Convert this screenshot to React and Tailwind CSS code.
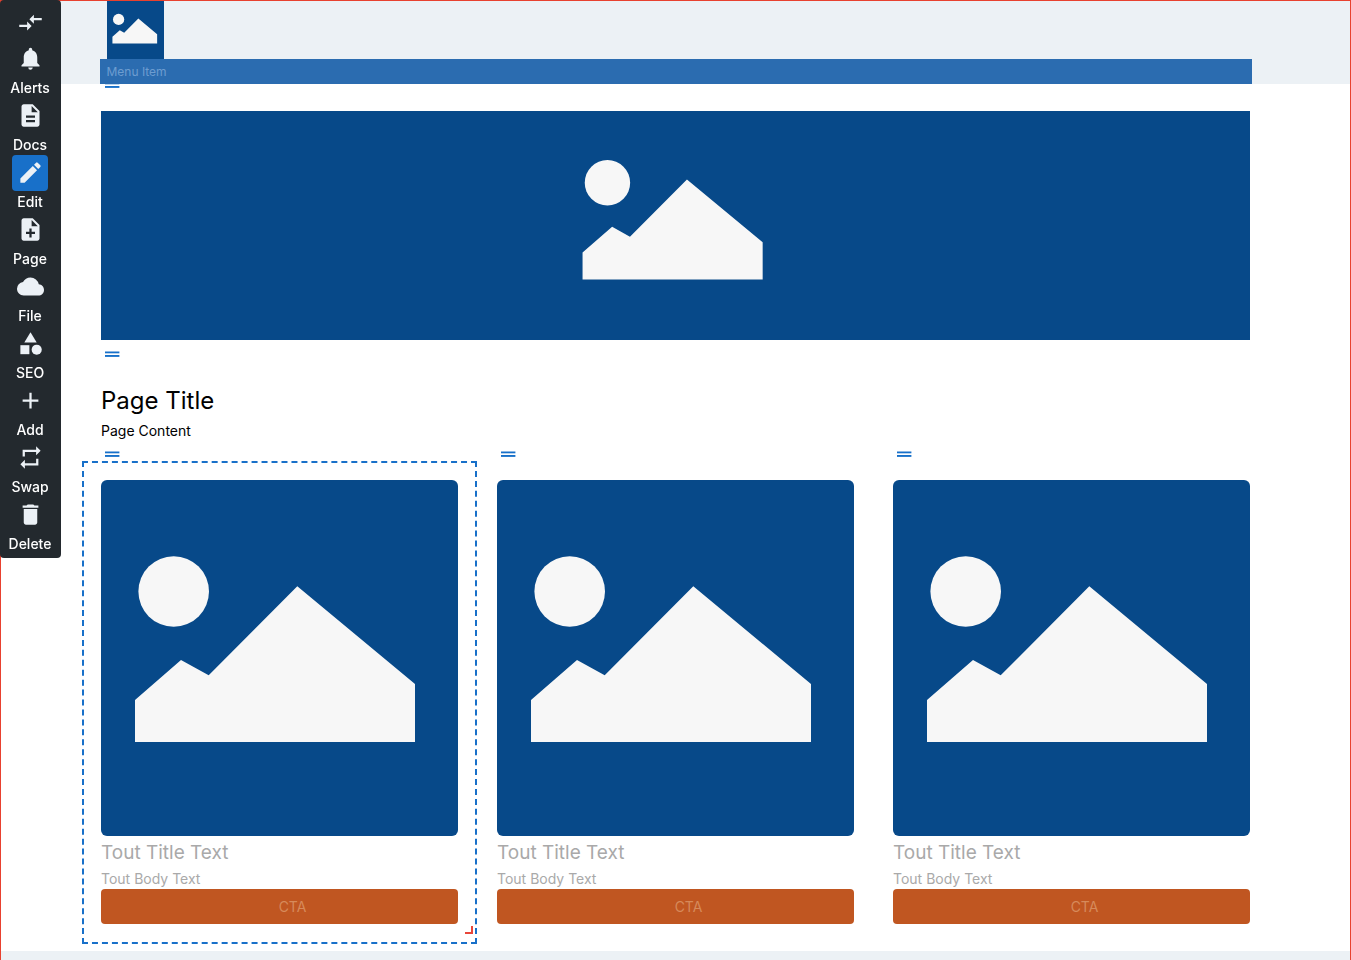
import React from "react";
import {
  MdAdd,
  MdCategory,
  MdCloud,
  MdCompareArrows,
  MdDelete,
  MdDescription,
  MdEdit,
  MdNoteAdd,
  MdNotifications,
  MdRepeat,
} from "react-icons/md";

const tools = [
  { label: "Alerts", Icon: MdNotifications },
  { label: "Docs", Icon: MdDescription },
  { label: "Edit", Icon: MdEdit, active: true },
  { label: "Page", Icon: MdNoteAdd },
  { label: "File", Icon: MdCloud },
  { label: "SEO", Icon: MdCategory },
  { label: "Add", Icon: MdAdd },
  { label: "Swap", Icon: MdRepeat },
  { label: "Delete", Icon: MdDelete },
];

const touts = [{ id: 1, selected: true }, { id: 2 }, { id: 3 }];

function Placeholder({ className }) {
  return (
    <svg viewBox="0 0 357 356" className={className} role="img" aria-label="Placeholder">
      <g fill="#f7f7f7">
        <circle cx="72.7" cy="111.5" r="35.3" />
        <path d="M34 220 80 180 107.7 195.3 196.3 106.3 314 204V262H34Z" />
      </g>
    </svg>
  );
}

function Toolbar() {
  return (
    <nav
      aria-label="Editor tools"
      className="fixed left-0 top-0 z-20 flex w-[61px] flex-col items-center rounded bg-[#23292e] pb-1 pr-px pt-[5px] text-[#ecf1f6]"
    >
      <button type="button" aria-label="Collapse" className="flex size-9 items-center justify-center pb-px pl-px">
        <MdCompareArrows size={27} />
      </button>
      {tools.map(({ label, Icon, active }) => (
        <button key={label} type="button" className="flex w-full flex-col items-center">
          <span
            className={
              active
                ? "flex size-9 items-center justify-center rounded bg-[#1870c9] pb-px pl-px"
                : "flex size-9 items-center justify-center pb-px pl-px"
            }
          >
            <Icon size={27} />
          </span>
          <span className="text-sm font-medium leading-[21px] text-white">{label}</span>
        </button>
      ))}
    </nav>
  );
}

function Block({ className = "", children }) {
  return (
    <section className={`relative pt-[27px] ${className}`}>
      <button type="button" aria-label="Drag block" className="absolute -top-1.5 left-0 p-1 text-[#1870c9]">
        <svg width="15" height="6" viewBox="0 0 15 6" fill="currentColor" className="block">
          <rect x="0" y="0.5" width="14.4" height="1.8" />
          <rect x="0" y="4" width="14.4" height="1.9" />
        </svg>
      </button>
      {children}
    </section>
  );
}

function Tout({ selected }) {
  return (
    <Block>
      {selected && (
        <div className="pointer-events-none absolute -bottom-5 -left-[19px] -right-[19px] top-2 border-2 border-dashed border-[#1870c9]">
          <span className="absolute bottom-2 right-0.5 size-2 border-b-2 border-r-2 border-[#e8463a]" />
        </div>
      )}
      <div className="overflow-hidden rounded-md bg-[#074989]">
        <Placeholder className="block w-full" />
      </div>
      <h2 className="text-[19px] leading-[33px] text-[#a9a9a9]">Tout Title Text</h2>
      <p className="text-sm leading-5 text-[#a9a9a9]">Tout Body Text</p>
      <button
        type="button"
        className="block h-[35px] w-full rounded bg-[#c05621] pl-[26px] text-sm text-[#d68a5b]"
      >
        CTA
      </button>
    </Block>
  );
}

export default function App() {
  return (
    <div className="flex min-h-screen flex-col border-x border-t border-[#e8412f] bg-white font-['Inter',sans-serif] text-black">
      <Toolbar />
      <header className="relative z-10 bg-[#ecf1f5]">
        <div className="mx-auto max-w-[1152px]">
          <a href="#" className="ml-[7px] block w-[57px] bg-[#074989]">
            <Placeholder className="block h-[58px] w-full" />
          </a>
          <nav aria-label="Main" className="flex bg-[#2b6cb0] px-[7px]">
            <a href="#" className="text-xs leading-[25px] text-[#6d9dd0]">
              Menu Item
            </a>
          </nav>
        </div>
      </header>
      <main className="mx-auto w-full max-w-[1149px] pb-[27px]">
        <Block className="pb-[13px]">
          <div className="bg-[#074989]">
            <Placeholder className="block h-[229px] w-full" />
          </div>
        </Block>
        <Block className="pb-3">
          <h1 className="text-2xl leading-[41px]">Page Title</h1>
          <p className="text-sm leading-5">Page Content</p>
        </Block>
        <div className="grid grid-cols-3 gap-[39px]">
          {touts.map((tout) => (
            <Tout key={tout.id} selected={tout.selected} />
          ))}
        </div>
      </main>
      <footer className="flex-1 bg-[#ecf1f5]" />
    </div>
  );
}
